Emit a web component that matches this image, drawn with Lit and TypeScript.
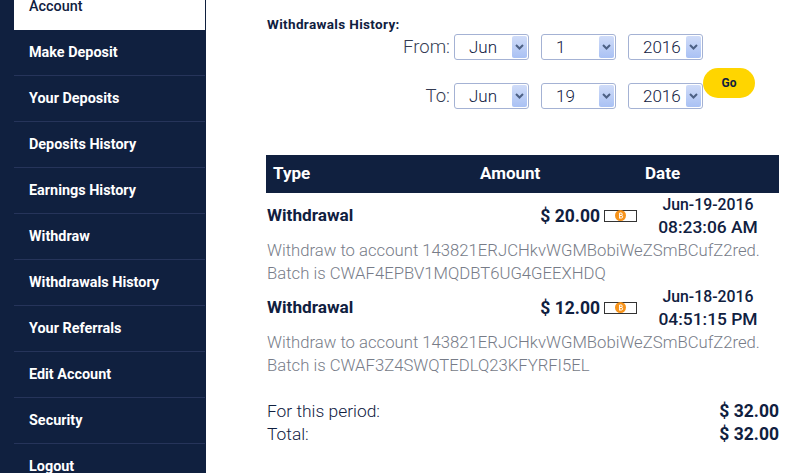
import { LitElement, html, css } from "lit";
import { customElement } from "lit/decorators.js";

const NAV = ["Account","Make Deposit","Your Deposits","Deposits History","Earnings History","Withdraw","Withdrawals History","Your Referrals","Edit Account","Security","Logout"];
const coin = html`<span class="coin"><svg width="11" height="11" viewBox="0 0 11 11"><circle cx="5.5" cy="5.5" r="5.5" fill="#f7931a"/><path d="M4.6 3v5M4.6 3h1.4a1.2 1.2 0 0 1 0 2.5H4.6M5.5 5.5h.9a1.25 1.25 0 0 1 0 2.5H4" fill="none" stroke="#fff" stroke-width="1"/></svg></span>`;

@customElement("app-root")
export class AppRoot extends LitElement {
  static styles = css`
    :host { display: block; width: 790px; height: 473px; overflow: hidden; background: #fff; font-family: "Roboto", "Liberation Sans", sans-serif; color: #10203f; }
    .page { display: flex; height: 473px; overflow: hidden; }
    .side { width: 192px; flex: none; padding-left: 14px; background: #10203f; }
    .nav { margin-top: -16px; }
    .item { height: 45px; line-height: 45px; padding-left: 15px; border-bottom: 1px solid #26345a; color: #fff; font-size: 14.4px; font-weight: 700; white-space: nowrap; margin-right: 1px; }
    .item.active { background: #fff; color: #10203f; font-weight: 500; height: 46px; line-height: 46px; border-bottom: 0; }
    .main { flex: none; width: 513px; margin-left: 60px; padding-top: 16px; }
    h1 { margin: 0; font-size: 13.5px; letter-spacing: 0.35px; line-height: 16px; font-weight: 700; padding-left: 1px; }
    .frow { display: flex; align-items: flex-start; margin-top: 23px; }
    .frow.top { margin-top: 2px; }
    .lab { width: 184px; text-align: right; font-size: 18.5px; font-weight: 300; line-height: 26px; color: #333b52; }
    .sel { box-sizing: border-box; width: 75px; height: 26px; margin-left: 4px; border: 1px solid #a4b2d4; border-radius: 3px; display: flex; align-items: center; padding: 1px 1px 1px 14px; font-size: 17px; font-weight: 300; color: #10203f; }
    .sel + .sel { margin-left: 12px; }
    .val { flex: 1; }
    .arr { width: 15px; height: 22px; flex: none; background: linear-gradient(#d0dcf8, #a9c1f4); border-radius: 2px; display: flex; align-items: center; justify-content: center; }
    .go { box-sizing: border-box; width: 52px; height: 30px; margin-top: -15px; border: 0; border-radius: 15px; background: #ffd500; color: #10203f; font: 700 12px "Roboto", sans-serif; padding: 0; }
    .thead { margin-top: 46px; height: 38px; padding-bottom: 2px; box-sizing: border-box; background: #10203f; color: #fff; display: grid; grid-template-columns: 207px 165px 1fr; align-items: center; font-size: 17px; font-weight: 700; padding-left: 7px; }
    .row { display: grid; grid-template-columns: 150px 221px 142px; height: 46px; }
    .type { align-self: center; font-size: 17.2px; font-weight: 700; padding: 0 0 2px 1px; }
    .amount { display: flex; align-items: center; justify-content: flex-end; gap: 4px; font-size: 17.5px; font-weight: 700; padding-bottom: 1px; }
    .coin { box-sizing: border-box; width: 33px; height: 12px; border: 1px solid #333; display: flex; align-items: center; justify-content: center; }
    .coin svg { display: block; }
    .date { text-align: center; font-weight: 500; line-height: 23px; white-space: nowrap; }
    .d1 { font-size: 15.8px; }
    .d2 { font-size: 17.4px; }
    .desc { padding-left: 1px; font-size: 16.7px; font-weight: 300; line-height: 23px; color: #777c88; height: 46px; white-space: nowrap; }
    .tot { display: flex; justify-content: space-between; font-size: 17.4px; line-height: 23px; font-weight: 300; padding-left: 1px; }
    .tot b { font-size: 17.5px; font-weight: 700; }
    .tots { margin-top: 23px; }
  `;

  sel(v: string) {
    return html`<div class="sel"><span class="val">${v}</span><span class="arr"><svg width="9" height="6" viewBox="0 0 9 6"><path d="M1 1l3.5 3.5L8 1" fill="none" stroke="#4d6185" stroke-width="2"/></svg></span></div>`;
  }

  tx(amount: string, d1: string, d2: string, batch: string) {
    return html`<div class="row"><div class="type">Withdrawal</div><div class="amount"><span>${amount}</span>${coin}</div><div class="date"><span class="d1">${d1}</span><br /><span class="d2">${d2}</span></div></div>
      <div class="desc">Withdraw to account 143821ERJCHkvWGMBobiWeZSmBCufZ2red.<br />Batch is ${batch}</div>`;
  }

  render() {
    return html`<div class="page">
      <aside class="side"><div class="nav">${NAV.map((n, i) => html`<div class="item ${i === 0 ? "active" : ""}">${n}</div>`)}</div></aside>
      <main class="main">
        <h1>Withdrawals History:</h1>
        <div class="frow top"><div class="lab">From:</div>${this.sel("Jun")}${this.sel("1")}${this.sel("2016")}</div>
        <div class="frow"><div class="lab">To:</div>${this.sel("Jun")}${this.sel("19")}${this.sel("2016")}<button class="go">Go</button></div>
        <div class="thead"><span>Type</span><span>Amount</span><span>Date</span></div>
        ${this.tx("$ 20.00", "Jun-19-2016", "08:23:06 AM", "CWAF4EPBV1MQDBT6UG4GEEXHDQ")}
        ${this.tx("$ 12.00", "Jun-18-2016", "04:51:15 PM", "CWAF3Z4SWQTEDLQ23KFYRFI5EL")}
        <div class="tots">
          <div class="tot"><span>For this period:</span><b>$ 32.00</b></div>
          <div class="tot"><span>Total:</span><b>$ 32.00</b></div>
        </div>
      </main>
    </div>`;
  }
}
